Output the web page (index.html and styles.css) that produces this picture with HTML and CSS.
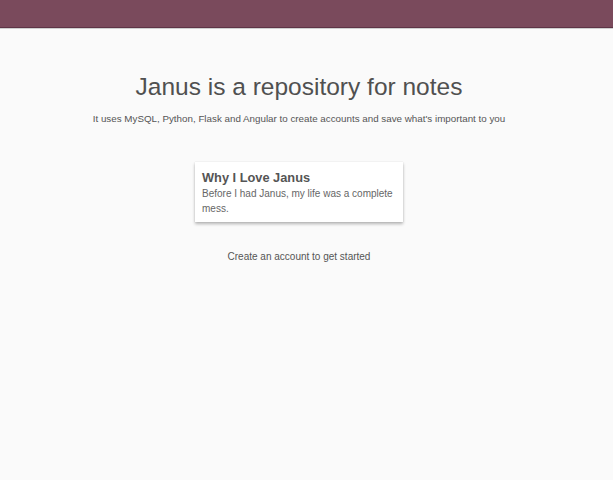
FILE: index.html
```html
<!DOCTYPE html>
<html>
<head>
<meta charset="utf-8">
<link rel="stylesheet" href="styles.css">
</head>
<body>
<header class="topbar"></header>
<main class="content">
  <h1 class="title">Janus is a repository for notes</h1>
  <p class="subtitle">It uses MySQL, Python, Flask and Angular to create accounts and save what's important to you</p>
  <div class="card">
    <h2 class="card-title">Why I Love Janus</h2>
    <p class="card-text">Before I had Janus, my life was a complete mess.</p>
  </div>
  <p class="cta">Create an account to get started</p>
</main>
</body>
</html>
```
FILE: styles.css
```css
html, body {
  margin: 0;
  padding: 0;
  background: #fafafa;
  font-family: "Liberation Sans", Arial, sans-serif;
  color: #555;
}
body {
  padding-right: 15px;
  min-height: 480px;
  box-sizing: border-box;
}
.topbar {
  height: 27px;
  background: #7a4a5c;
  border-bottom: 1px solid #5e3446;
  box-shadow: 0 1px 0 #cfcfcf;
  margin-right: -15px;
}
.content {
  display: flex;
  flex-direction: column;
  align-items: center;
}
.title {
  margin: 44px 0 0;
  font-size: 24.5px;
  font-weight: normal;
  line-height: 30px;
  color: #505050;
}
.subtitle {
  margin: 10px 0 0;
  font-size: 9.8px;
  line-height: 14px;
}
.card {
  margin-top: 36px;
  width: 208px;
  box-sizing: border-box;
  padding: 8px 7px 6px;
  background: #fff;
  box-shadow: 0 2px 3px rgba(0,0,0,0.28), 0 0 1px rgba(0,0,0,0.12);
}
.card-title {
  margin: 0;
  font-size: 12.8px;
  font-weight: bold;
  line-height: 16px;
  color: #555;
}
.card-text {
  margin: 0;
  font-size: 10px;
  line-height: 15px;
  color: #666;
}
.cta {
  margin: 28px 0 0;
  font-size: 10px;
  line-height: 14px;
}
```
